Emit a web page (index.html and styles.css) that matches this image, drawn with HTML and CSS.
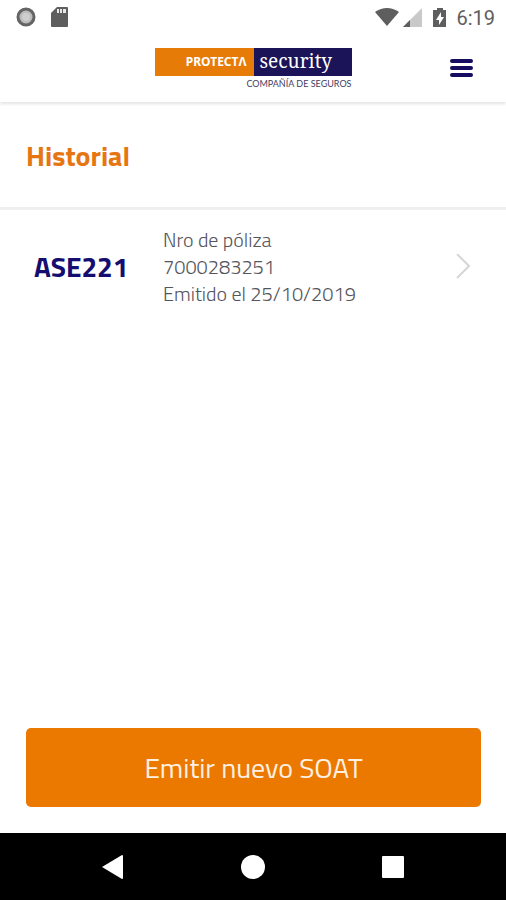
FILE: index.html
```html
<!DOCTYPE html>
<html lang="es">
<head>
<meta charset="utf-8">
<meta name="viewport" content="width=device-width, initial-scale=1">
<title>Historial</title>
<link rel="stylesheet" href="styles.css">
</head>
<body>
<div class="status">
  <svg class="status-icon" viewBox="0 0 24 24" aria-hidden="true"><circle cx="12" cy="11" r="8" fill="#bcbcbc" stroke="#646464" stroke-width="3"/><circle cx="12" cy="11" r="4" fill="#cecece"/></svg>
  <svg class="status-icon" viewBox="0 0 24 24" aria-hidden="true"><path d="M9 1h10q1 0 1 1v18q0 1-1 1H4q-1 0-1-1V7z" fill="#5e5e5e"/><path d="M9 3h2v4H9zM12 3h2v4h-2zM15 3h3v4h-3z" fill="#e8e8e8"/></svg>
  <div class="status-right">
    <svg class="wifi" viewBox="0 0 26 20" aria-hidden="true"><path d="M0 4Q12-4 24 4L12 18z" fill="#5e5e5e"/></svg>
    <svg class="signal" viewBox="0 0 20 20" aria-hidden="true"><path d="M0 19L19 0v19z" fill="#c9c9c9"/><path d="M0 19l7-7v7z" fill="#5e5e5e"/></svg>
    <svg class="battery" viewBox="0 0 14 20" aria-hidden="true"><path d="M4 0h6v2h3v17H0V2h4z" fill="#5e5e5e"/><path d="M8 4L3 12h3v5l5-8H8z" fill="#fff"/></svg>
    <span class="time">6:19</span>
  </div>
</div>
<header class="header">
  <a class="logo" href="#" aria-label="Protecta Security">
    <span class="logo-bar"><span class="protecta">PROTECTΛ</span><span class="security">security</span></span>
    <span class="tagline">COMPAÑÍA DE SEGUROS</span>
  </a>
  <button class="menu" type="button" aria-label="Menú">
    <svg viewBox="0 0 24 20" aria-hidden="true"><path d="M3 2h19M3 9h19M3 16h19" stroke="#160c60" stroke-width="4" stroke-linecap="round"/></svg>
  </button>
</header>
<main class="main">
  <h1 class="title">Historial</h1>
  <a class="policy" href="#">
    <strong class="plate">ASE221</strong>
    <span class="details"><span>Nro de póliza</span><span>7000283251</span><span>Emitido el 25/10/2019</span></span>
    <svg class="chevron" viewBox="0 0 14 26" aria-hidden="true"><path d="M1 0l12 12L1 24" fill="none" stroke="#d6d6d6" stroke-width="2"/></svg>
  </a>
  <button class="issue" type="button">Emitir nuevo SOAT</button>
</main>
<nav class="nav">
  <button type="button" aria-label="Atrás"><svg viewBox="0 0 24 24" aria-hidden="true"><path d="M1 12L21 0q1 0 1 1v22q0 1-1 1z" fill="#fff"/></svg></button>
  <button type="button" aria-label="Inicio"><svg viewBox="0 0 24 24" aria-hidden="true"><circle cx="12" cy="12" r="12" fill="#fff"/></svg></button>
  <button type="button" aria-label="Recientes"><svg viewBox="0 0 24 24" aria-hidden="true"><rect x="1" y="1" width="22" height="22" rx="1" fill="#fff"/></svg></button>
</nav>
</body>
</html>
```
FILE: styles.css
```css
* { box-sizing: border-box; }
body {
  margin: 0;
  min-height: 100vh;
  display: flex;
  flex-direction: column;
  background: #fff;
  color: #55555c;
  font-family: "Titillium Web", "Noto Sans", sans-serif;
}
button { border: 0; padding: 0; background: none; font: inherit; }
a { color: inherit; text-decoration: none; }
svg { display: block; }
.status {
  display: flex;
  align-items: center;
  gap: 10px;
  height: 36px;
  padding: 0 11px 0 14px;
}
.status-icon { width: 24px; height: 24px; }
.status-right { display: flex; align-items: center; margin-left: auto; }
.wifi { width: 26px; height: 20px; margin-right: 2px; }
.signal { width: 20px; height: 20px; margin-right: 10px; }
.battery { width: 14px; height: 20px; margin-right: 9px; }
.time { font: 20px/24px Roboto, sans-serif; color: #5e5e5e; }
.header {
  display: grid;
  grid-template-columns: 1fr auto 1fr;
  align-items: center;
  height: 66px;
  padding: 0 32px;
  box-shadow: 0 2px 3px #e4e4e4;
}
.logo { grid-column: 2; display: flex; flex-direction: column; width: 197px; padding-top: 2px; }
.logo-bar { display: flex; height: 28px; color: #fff; }
.protecta {
  flex: 1;
  padding-right: 7px;
  background: #e77b08;
  font: bold 12px/28px "Noto Sans", sans-serif;
  text-align: right;
}
.security {
  flex: 1;
  padding-left: 6px;
  background: #1c1458;
  font: 19px/26px "Noto Serif", "Liberation Serif", serif;
}
.tagline { font: 9px/16px Lato, sans-serif; color: #44405f; text-align: right; white-space: nowrap; }
.menu { justify-self: end; width: 25px; height: 20px; }
.menu svg { width: 24px; height: 20px; }
.main { flex: 1; display: flex; flex-direction: column; }
.title {
  margin: 0;
  padding: 36px 26px 33px;
  border-bottom: 3px solid #efefef;
  color: #e57612;
  font-size: 28px;
  font-weight: 700;
  line-height: 36px;
}
.policy { display: flex; align-items: center; padding: 16px 36px 12px 34px; }
.plate { width: 129px; color: #150d70; font-size: 28px; font-weight: 700; line-height: 36px; }
.details { display: flex; flex-direction: column; font-size: 20px; font-weight: 300; line-height: 27px; }
.chevron { width: 14px; height: 26px; margin-left: auto; }
.issue {
  margin: auto 25px 26px 26px;
  height: 79px;
  border-radius: 5px;
  background: #eb7900;
  color: #fff0e4;
  font-size: 28px;
}
.nav { display: flex; justify-content: center; gap: 116px; height: 67px; align-items: center; background: #000; }
.nav svg { width: 24px; height: 24px; }
```
